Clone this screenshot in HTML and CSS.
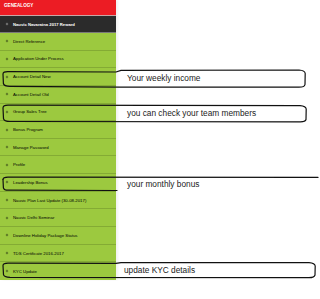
FILE: index.html
```html
<!DOCTYPE html>
<html>
<head>
<meta charset="utf-8">
<link rel="stylesheet" href="styles.css">
</head>
<body>
<div class="page">
  <aside class="sidebar">
    <div class="title">GENEALOGY</div>
    <div class="reward"><span class="dot"></span>Nauvic Navaratna 2017 Reward</div>
    <ul class="menu">
      <li><span class="dot"></span>Direct Reference</li>
      <li><span class="dot"></span>Application Under Process</li>
      <li><span class="dot"></span>Account Detail New</li>
      <li><span class="dot"></span>Account Detail Old</li>
      <li><span class="dot"></span>Group Sales Tree</li>
      <li><span class="dot"></span>Bonus Program</li>
      <li><span class="dot"></span>Manage Password</li>
      <li><span class="dot"></span>Profile</li>
      <li><span class="dot"></span>Leadership Bonus</li>
      <li><span class="dot"></span>Nauvic Plan Last Update (30-08-2017)</li>
      <li><span class="dot"></span>Nauvic Delhi Seminar</li>
      <li><span class="dot"></span>Downline Holiday Package Status</li>
      <li><span class="dot"></span>TDS Certificate 2016-2017</li>
      <li><span class="dot"></span>KYC Update</li>
    </ul>
  </aside>

  <svg class="marks" width="320" height="299" viewBox="0 0 320 299">
    <path d="M3,74 Q3,71.5 8,71.6 L116,72 L121,70.4 L299,70 Q305,70.4 305.2,73.5 L305,84.5 Q304.5,87.2 299,87.2 L121,87.1 L10,86.3 Q4,86.3 3.4,83.5 Z"/>
    <path d="M3,108 Q3,105.2 8,105.2 L300,105.6 Q306,106 306.2,109 L306,119.5 Q305.4,121.9 300,121.8 L10,121.5 Q4,121.4 3.5,118.6 Z"/>
    <path d="M3,179.5 Q3,177.2 8,177.2 L318,177.4"/>
    <path d="M3,179.5 L3.4,187.8 Q4,190.4 9,190.2 L117,190.5"/>
    <path d="M3,265.5 Q3,263.2 8,263.2 L116,263.4 L121,262.6 L309,262.6 Q315,263 315.2,266 L315,275 Q314.4,277.6 309,277.7 L10,277.3 Q4,277.1 3.5,274.6 Z"/>
  </svg>

  <div class="note n1">Your weekly income</div>
  <div class="note n2">you can check your team members</div>
  <div class="note n3">your monthly bonus</div>
  <div class="note n4">update KYC details</div>
</div>
</body>
</html>
```

FILE: styles.css
```css
html, body {
  margin: 0;
  padding: 0;
  background: #ffffff;
}

.page {
  position: relative;
  width: 320px;
  height: 299px;
  overflow: hidden;
  font-family: "Liberation Sans", Arial, sans-serif;
}

.sidebar {
  width: 116px;
  display: flex;
  flex-direction: column;
  box-shadow: 2px 0 2px rgba(0, 0, 0, 0.05);
}

.title {
  height: 16px;
  box-sizing: border-box;
  background: #ec1c24;
  color: #ffffff;
  font-weight: bold;
  font-size: 4.6px;
  line-height: 12px;
  padding-left: 4px;
  border-bottom: 1px solid #c9a6a6;
}

.reward {
  height: 17px;
  background: #2b2b2b;
  border-bottom: 1px solid #7a7a7a;
  box-sizing: border-box;
  color: #ffffff;
  font-weight: bold;
  font-size: 4.2px;
  display: flex;
  align-items: center;
  padding-left: 6px;
}

.reward .dot {
  background: #777;
}

.menu {
  list-style: none;
  margin: 0;
  padding: 0;
  background: #9cc93f;
}

.menu li {
  height: 17.65px;
  box-sizing: border-box;
  border-bottom: 1px solid #84ab34;
  display: flex;
  align-items: center;
  padding-left: 6px;
  font-size: 4.3px;
  color: #000000;
}

.menu li:last-child {
  border-bottom: none;
}

.dot {
  width: 2px;
  height: 2px;
  background: #5a7426;
  transform: rotate(45deg);
  margin-right: 5px;
  flex: none;
}

.marks {
  position: absolute;
  left: 0;
  top: 0;
  pointer-events: none;
}

.marks path {
  fill: none;
  stroke: #111111;
  stroke-width: 1.2;
  stroke-linejoin: round;
  stroke-linecap: round;
}

.note {
  position: absolute;
  font-size: 8.3px;
  line-height: 10px;
  color: #222222;
  white-space: nowrap;
}

.n1 { left: 127px; top: 73px; }
.n2 { left: 127px; top: 107.5px; }
.n3 { left: 127px; top: 178.5px; }
.n4 { left: 124px; top: 265px; }
```
